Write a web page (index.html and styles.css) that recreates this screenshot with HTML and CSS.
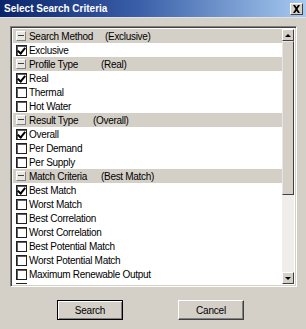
FILE: index.html
```html
<!DOCTYPE html>
<html>
<head>
<meta charset="utf-8">
<link rel="stylesheet" href="styles.css">
</head>
<body>
<div class="dialog">
  <div class="titlebar">
    <span class="title">Select Search Criteria</span>
    <span class="close"><svg width="9" height="8" viewBox="0 0 9 8"><path d="M1 0h2l1.5 2.2L6 0h2L5.5 4 8 8H6L4.5 5.8 3 8H1l2.5-4z" fill="#000"/></svg></span>
  </div>
  <div class="content">
    <div class="listbox">
      <div class="rows">
        <div class="row hdr"><span class="minus"></span><span class="label lw-method">Search Method</span><span>(Exclusive)</span></div>
        <div class="row"><span class="cb on"></span>Exclusive</div>
        <div class="row hdr"><span class="minus"></span><span class="label lw-profile">Profile Type</span><span>(Real)</span></div>
        <div class="row"><span class="cb on"></span>Real</div>
        <div class="row"><span class="cb"></span>Thermal</div>
        <div class="row"><span class="cb"></span>Hot Water</div>
        <div class="row hdr"><span class="minus"></span><span class="label lw-result">Result Type</span><span>(Overall)</span></div>
        <div class="row"><span class="cb on"></span>Overall</div>
        <div class="row"><span class="cb"></span>Per Demand</div>
        <div class="row"><span class="cb"></span>Per Supply</div>
        <div class="row hdr"><span class="minus"></span><span class="label lw-match">Match Criteria</span><span>(Best Match)</span></div>
        <div class="row"><span class="cb on"></span>Best Match</div>
        <div class="row"><span class="cb"></span>Worst Match</div>
        <div class="row"><span class="cb"></span>Best Correlation</div>
        <div class="row"><span class="cb"></span>Worst Correlation</div>
        <div class="row"><span class="cb"></span>Best Potential Match</div>
        <div class="row"><span class="cb"></span>Worst Potential Match</div>
        <div class="row"><span class="cb"></span>Maximum Renewable Output</div>
        <div class="row"><span class="cb"></span>Minimum Renewable Output</div>
      </div>
      <div class="scrollbar">
        <div class="sb-btn"><span class="arrow up"></span></div>
        <div class="thumb"></div>
        <div class="track"></div>
        <div class="sb-btn"><span class="arrow down"></span></div>
      </div>
    </div>
    <div class="buttons">
      <button class="btn default">Search</button>
      <button class="btn">Cancel</button>
    </div>
  </div>
</div>
</body>
</html>
```
FILE: styles.css
```css
* { box-sizing: border-box; }
html, body { margin: 0; padding: 0; }
body {
  width: 306px;
  height: 329px;
  background: #d4d0c8;
  font-family: "Liberation Sans", Arial, sans-serif;
  font-size: 10px;
  letter-spacing: -0.3px;
  color: #000;
  overflow: hidden;
}
.dialog {
  display: flex;
  flex-direction: column;
  width: 306px;
  height: 329px;
}
.titlebar {
  height: 18px;
  display: flex;
  align-items: center;
  justify-content: space-between;
  padding: 0 3px 0 4px;
  background: linear-gradient(to right, #0a246a 0%, #3a5fa8 45%, #a6caf0 100%);
  border-bottom: 1px solid #e4e2dc;
}
.title {
  color: #fff;
  font-weight: bold;
  font-size: 10px;
  letter-spacing: 0;
}
.close {
  width: 13px;
  height: 12px;
  background: #d4d0c8;
  border-top: 1px solid #fff;
  border-left: 1px solid #fff;
  border-right: 1px solid #404040;
  border-bottom: 1px solid #404040;
  display: flex;
  align-items: center;
  justify-content: center;
}
.content {
  flex: 1;
  display: flex;
  flex-direction: column;
  padding: 8px 9px 0 10px;
}
.listbox {
  height: 261px;
  display: flex;
  border-top: 1px solid #808080;
  border-left: 1px solid #808080;
  border-right: 1px solid #fff;
  border-bottom: 1px solid #fff;
  box-shadow: inset 1px 1px 0 #404040, inset -1px -1px 0 #d4d0c8;
  padding: 2px;
  background: #fff;
  overflow: hidden;
}
.rows {
  flex: 1;
  overflow: hidden;
  padding-top: 0;
}
.row {
  height: 14px;
  display: flex;
  align-items: center;
  padding-left: 3px;
  white-space: nowrap;
  background: #fff;
}
.row.hdr { background: #d4d0c8; }
.label { display: inline-block; }
.lw-method { width: 76px; }
.lw-profile { width: 72px; }
.lw-result { width: 64px; }
.lw-match { width: 72px; }
.minus {
  width: 10px;
  height: 10px;
  margin-right: 3px;
  background: #e8e6e0;
  border-top: 1px solid #fff;
  border-left: 1px solid #fff;
  border-right: 1px solid #808080;
  border-bottom: 1px solid #808080;
  position: relative;
  flex: none;
}
.minus::after {
  content: "";
  position: absolute;
  left: 1px;
  right: 1px;
  top: 3px;
  height: 1px;
  background: #404040;
}
.cb {
  width: 11px;
  height: 11px;
  margin-right: 2px;
  border: 1px solid #202020;
  box-shadow: inset 1px 1px 0 #606060;
  background: #fff;
  position: relative;
  flex: none;
}
.cb.on::after {
  content: "";
  position: absolute;
  left: 2px;
  top: 0px;
  width: 3px;
  height: 6px;
  border-right: 2px solid #000;
  border-bottom: 2px solid #000;
  transform: rotate(40deg);
  transform-origin: center;
}
.scrollbar {
  width: 12px;
  display: flex;
  flex-direction: column;
  flex: none;
}
.sb-btn {
  height: 12px;
  background: #d4d0c8;
  border-top: 1px solid #fff;
  border-left: 1px solid #fff;
  border-right: 1px solid #404040;
  border-bottom: 1px solid #404040;
  display: flex;
  align-items: center;
  justify-content: center;
  flex: none;
}
.arrow {
  width: 0;
  height: 0;
  border-left: 3px solid transparent;
  border-right: 3px solid transparent;
}
.arrow.up { border-bottom: 3px solid #000; }
.arrow.down { border-top: 3px solid #000; }
.thumb {
  height: 154px;
  background: #d4d0c8;
  border-top: 1px solid #e8e6e0;
  border-left: 1px solid #e8e6e0;
  border-right: 1px solid #404040;
  border-bottom: 1px solid #404040;
  flex: none;
}
.track {
  flex: 1;
  background: #efeeea;
}
.buttons {
  display: flex;
  padding-left: 47px;
  gap: 55px;
  margin-top: 13px;
}
.btn {
  width: 66px;
  height: 20px;
  font-family: "Liberation Sans", Arial, sans-serif;
  font-size: 10px;
  letter-spacing: -0.2px;
  color: #000;
  background: #d4d0c8;
  border-top: 1px solid #fff;
  border-left: 1px solid #fff;
  border-right: 1px solid #404040;
  border-bottom: 1px solid #404040;
  box-shadow: inset -1px -1px 0 #808080;
  padding: 0;
}
.btn.default {
  border: 1px solid #000;
  box-shadow: inset 1px 1px 0 #fff, inset -1px -1px 0 #808080;
}
```
